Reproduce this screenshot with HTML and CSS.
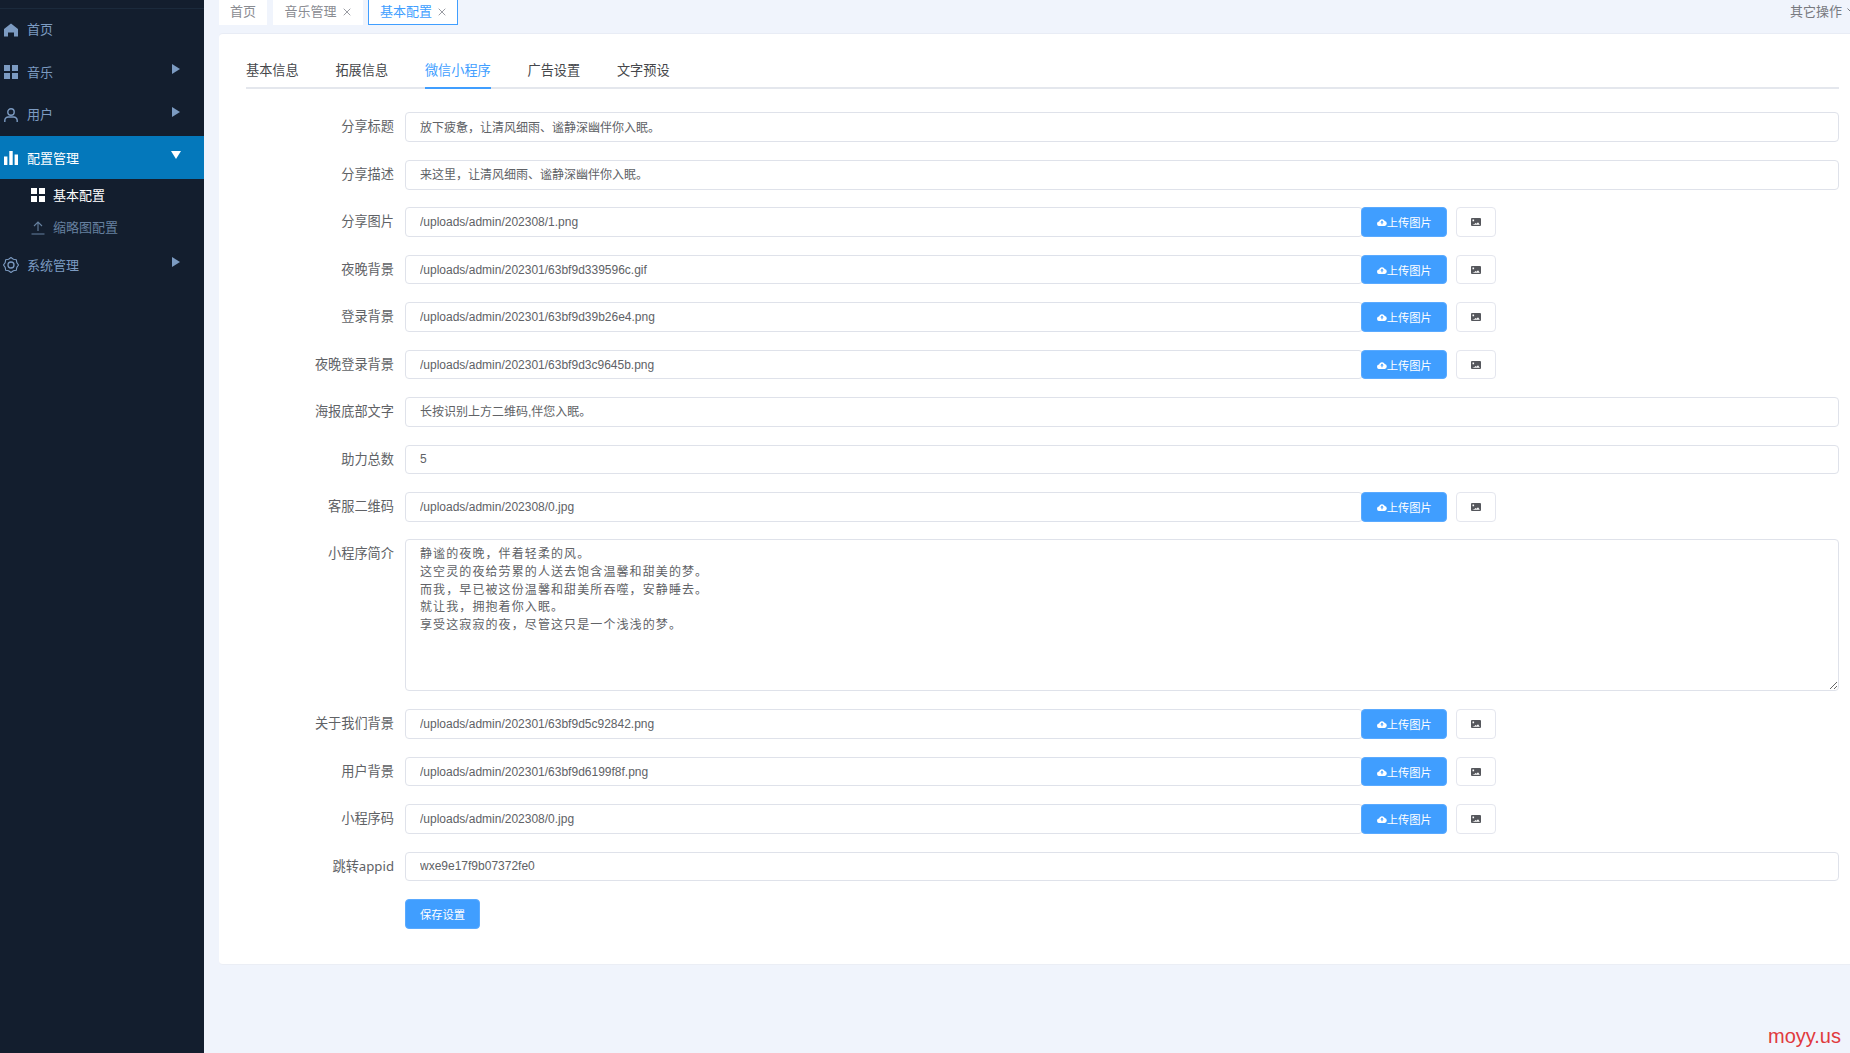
FILE: index.html
```html
<!DOCTYPE html>
<html lang="zh-CN">
<head>
<meta charset="utf-8">
<title>基本配置</title>
<link rel="stylesheet" href="styles.css">
</head>
<body>
<svg class="defs" width="0" height="0" aria-hidden="true">
  <symbol id="i-grid" viewBox="0 0 14 14"><path d="M0 0h6v6H0zM8 0h6v6H8zM0 8h6v6H0zM8 8h6v6H8z"/></symbol>
  <symbol id="i-right" viewBox="0 0 8 10"><path d="M0 0l8 5-8 5z"/></symbol>
  <symbol id="i-x" viewBox="0 0 8 8"><path d="M.7.7l6.6 6.6M7.3.7L.7 7.3" fill="none" stroke="currentColor" stroke-width="1"/></symbol>
  <symbol id="i-cloud" viewBox="0 0 11 9"><path fill-rule="evenodd" d="M2.6 9A2.5 2.5 0 0 1 2.2 4 3.4 3.4 0 0 1 8.6 3.3 2.9 2.9 0 0 1 8.4 9zM5.5 2.8L3.6 5h1.3v2h1.2V5h1.3z"/></symbol>
  <symbol id="i-pic" viewBox="0 0 10 8"><path fill-rule="evenodd" d="M1 0h8a1 1 0 0 1 1 1v6a1 1 0 0 1-1 1H1a1 1 0 0 1-1-1V1a1 1 0 0 1 1-1zM1.500 1.600v1.600h1.600V1.600zM1.200 6.800h7.600L7 4.300 5.600 5.800 4.600 5l-1.100 1z"/></symbol>
</svg>
<div class="app">
  <aside class="sidebar">
    <div class="side-top"></div>
    <a class="menu-item">
      <svg class="ico" viewBox="0 0 14 14"><path d="M7 .5L14 6v7.500H10V9.500H4v4H0V6z"/></svg>
      <span>首页</span>
    </a>
    <a class="menu-item">
      <svg class="ico"><use href="#i-grid"/></svg>
      <span>音乐</span>
      <svg class="arrow"><use href="#i-right"/></svg>
    </a>
    <a class="menu-item">
      <svg class="ico" viewBox="0 0 14 14"><circle cx="7" cy="4" r="3.200" fill="none" stroke="currentColor" stroke-width="1.400"/><path d="M.8 14v-1.500A3.500 3.500 0 0 1 4.300 9h5.400a3.500 3.500 0 0 1 3.500 3.500V14" fill="none" stroke="currentColor" stroke-width="1.400"/></svg>
      <span>用户</span>
      <svg class="arrow"><use href="#i-right"/></svg>
    </a>
    <a class="menu-item active">
      <svg class="ico" viewBox="0 0 14 14"><path d="M0 5.500h3.400V14H0zM5.300 0h3.400v14H5.300zM10.600 3.500H14V14h-3.400z"/></svg>
      <span>配置管理</span>
      <svg class="arrow down" viewBox="0 0 10 8"><path d="M0 0h10L5 8z"/></svg>
    </a>
    <a class="sub-item current">
      <svg class="ico"><use href="#i-grid"/></svg>
      <span>基本配置</span>
    </a>
    <a class="sub-item">
      <svg class="ico" viewBox="0 0 14 14"><path d="M7 1v9M3 5l4-4 4 4M.500 13h13" fill="none" stroke="currentColor" stroke-width="1.100"/></svg>
      <span>缩略图配置</span>
    </a>
    <a class="menu-item">
      <svg class="ico gear" viewBox="0 0 16 16"><path d="M15.500 8L13.820 10.410 13.300 13.300 10.410 13.820 8 15.500 5.590 13.820 2.700 13.300 2.180 10.410 .5 8 2.180 5.590 2.700 2.700 5.590 2.180 8 .5 10.410 2.180 13.300 2.700 13.820 5.590z" fill="none" stroke="currentColor" stroke-width="1.100" stroke-linejoin="round"/><circle cx="8" cy="8" r="3" fill="none" stroke="currentColor" stroke-width="1.300"/></svg>
      <span>系统管理</span>
      <svg class="arrow"><use href="#i-right"/></svg>
    </a>
  </aside>

  <main class="main">
    <header class="page-tabs">
      <a class="page-tab">首页</a>
      <a class="page-tab closable">音乐管理<svg class="close"><use href="#i-x"/></svg></a>
      <a class="page-tab closable on">基本配置<svg class="close"><use href="#i-x"/></svg></a>
      <span class="other">其它操作<svg class="other-chev" viewBox="0 0 8 5"><path d="M.5.500L4 4 7.500.500" fill="none" stroke="currentColor"/></svg></span>
    </header>

    <section class="card">
      <nav class="tabs">
        <a class="tab">基本信息</a>
        <a class="tab">拓展信息</a>
        <a class="tab on">微信小程序</a>
        <a class="tab">广告设置</a>
        <a class="tab">文字预设</a>
      </nav>

      <form class="form">
        <div class="row"><label class="label">分享标题</label><input class="input cjk" value="放下疲惫，让清风细雨、谧静深幽伴你入眠。"></div>
        <div class="row"><label class="label">分享描述</label><input class="input cjk" value="来这里，让清风细雨、谧静深幽伴你入眠。"></div>
        <div class="row upload"><label class="label">分享图片</label><input class="input" value="/uploads/admin/202308/1.png"><button type="button" class="btn-up"><svg class="cloud"><use href="#i-cloud"/></svg>上传图片</button><button type="button" class="btn-pic"><svg class="pic"><use href="#i-pic"/></svg></button></div>
        <div class="row upload"><label class="label">夜晚背景</label><input class="input" value="/uploads/admin/202301/63bf9d339596c.gif"><button type="button" class="btn-up"><svg class="cloud"><use href="#i-cloud"/></svg>上传图片</button><button type="button" class="btn-pic"><svg class="pic"><use href="#i-pic"/></svg></button></div>
        <div class="row upload"><label class="label">登录背景</label><input class="input" value="/uploads/admin/202301/63bf9d39b26e4.png"><button type="button" class="btn-up"><svg class="cloud"><use href="#i-cloud"/></svg>上传图片</button><button type="button" class="btn-pic"><svg class="pic"><use href="#i-pic"/></svg></button></div>
        <div class="row upload"><label class="label">夜晚登录背景</label><input class="input" value="/uploads/admin/202301/63bf9d3c9645b.png"><button type="button" class="btn-up"><svg class="cloud"><use href="#i-cloud"/></svg>上传图片</button><button type="button" class="btn-pic"><svg class="pic"><use href="#i-pic"/></svg></button></div>
        <div class="row"><label class="label">海报底部文字</label><input class="input cjk" value="长按识别上方二维码,伴您入眠。"></div>
        <div class="row"><label class="label">助力总数</label><input class="input" value="5"></div>
        <div class="row upload"><label class="label">客服二维码</label><input class="input" value="/uploads/admin/202308/0.jpg"><button type="button" class="btn-up"><svg class="cloud"><use href="#i-cloud"/></svg>上传图片</button><button type="button" class="btn-pic"><svg class="pic"><use href="#i-pic"/></svg></button></div>
        <div class="row"><label class="label">小程序简介</label><textarea class="textarea">静谧的夜晚，伴着轻柔的风。
这空灵的夜给劳累的人送去饱含温馨和甜美的梦。
而我，早已被这份温馨和甜美所吞噬，安静睡去。
就让我，拥抱着你入眠。
享受这寂寂的夜，尽管这只是一个浅浅的梦。</textarea></div>
        <div class="row upload"><label class="label">关于我们背景</label><input class="input" value="/uploads/admin/202301/63bf9d5c92842.png"><button type="button" class="btn-up"><svg class="cloud"><use href="#i-cloud"/></svg>上传图片</button><button type="button" class="btn-pic"><svg class="pic"><use href="#i-pic"/></svg></button></div>
        <div class="row upload"><label class="label">用户背景</label><input class="input" value="/uploads/admin/202301/63bf9d6199f8f.png"><button type="button" class="btn-up"><svg class="cloud"><use href="#i-cloud"/></svg>上传图片</button><button type="button" class="btn-pic"><svg class="pic"><use href="#i-pic"/></svg></button></div>
        <div class="row upload"><label class="label">小程序码</label><input class="input" value="/uploads/admin/202308/0.jpg"><button type="button" class="btn-up"><svg class="cloud"><use href="#i-cloud"/></svg>上传图片</button><button type="button" class="btn-pic"><svg class="pic"><use href="#i-pic"/></svg></button></div>
        <div class="row"><label class="label">跳转appid</label><input class="input" value="wxe9e17f9b07372fe0"></div>
        <div class="row actions"><button type="button" class="btn-save">保存设置</button></div>
      </form>
    </section>
  </main>
</div>
<div class="watermark">moyy.us</div>
</body>
</html>
```
FILE: styles.css
```css
* { box-sizing: border-box; }
html, body { margin: 0; height: 100%; overflow: hidden; }
body {
  font-family: "Liberation Sans", "Noto Sans CJK SC", sans-serif;
  background: #f0f4fc;
  color: #606266;
}
.defs { position: absolute; }
.app { display: flex; height: 1053px; }

/* sidebar */
.sidebar { width: 204px; flex: none; background: #131e2e; color: #7c9bc2; font-size: 13px; }
.side-top { height: 8.5px; border-bottom: 1px solid #1b2a3c; padding-top: 6px; }
.menu-item { display: flex; align-items: center; height: 42.5px; padding: 0 0 2px 4px; gap: 9px; }
.menu-item.active { background: #0478bb; color: #fff; height: 43px; padding-bottom: 0; }
.sub-item { display: flex; align-items: center; height: 32.500px; padding: 0 0 2px 31px; gap: 8px; color: #66809f; }
.sub-item.current { color: #fff; }
.ico { width: 14px; height: 14px; fill: currentColor; flex: none; margin-top: 2px; }
.active .ico { margin-top: 0; }
.ico.gear { width: 16px; height: 16px; margin-left: -1px; margin-right: -1px; }
.arrow { width: 8px; height: 10px; fill: currentColor; margin-left: auto; margin-right: 24px; margin-bottom: 4px; }
.arrow.down { width: 10px; height: 8px; margin-right: 23px; margin-bottom: 6px; fill: #fff; }

/* page tabs */
.main { flex: 1; min-width: 0; }
.page-tabs { height: 33px; display: flex; align-items: flex-start; padding-left: 15px; gap: 5.500px; font-size: 13px; }
.page-tab { height: 24.500px; background: #fff; padding: 0 10px 2px; display: flex; align-items: center; gap: 6px; color: #8a8c92; border: 1px solid #fff; border-top: 0; justify-content: center; }
.page-tab.closable { padding: 0 11px 2px; }
.page-tab.on { color: #409eff; border: 1px solid #409eff; border-top: 0; }
.close { width: 8px; height: 8px; color: #9a9ca3; margin-top: 2px; }
.other { margin-left: auto; margin-top: 1px; margin-right: -5px; display: flex; align-items: center; gap: 5px; color: #77797f; }
.other-chev { width: 8px; height: 5px; }

/* card */
.card { margin-left: 15px; height: 932px; background: #fff; border-top: 1px solid #e8ecf5; border-bottom: 1px solid #ebeef5; border-radius: 4px 0 0 4px; padding: 15px 11px 0 27px; }
.tabs { display: flex; gap: 36.700px; height: 40px; border-bottom: 2px solid #e4e7ed; font-size: 13.200px; color: #45474b; }
.tab { line-height: 43px; height: 40px; white-space: nowrap; }
.tab.on { color: #409eff; border-bottom: 2px solid #409eff; }

/* form */
.form { display: flex; flex-direction: column; gap: 17.750px; margin-top: 23.400px; }
.row { display: flex; align-items: flex-start; }
.upload { padding-right: 343.700px; }
.label { flex: none; width: 148px; margin-right: 11px; text-align: right; font: 13.200px/29.700px "Noto Sans", "Noto Sans CJK SC", sans-serif; color: #606266; white-space: nowrap; }
.input { flex: 1; min-width: 0; height: 29.700px; padding: 0 14px; border: 1px solid #dfe2ea; border-radius: 4px; background: #fff; font: 12px "Liberation Sans", "Noto Sans CJK SC", sans-serif; color: #606266; outline: 0; }
.input.cjk { padding-bottom: 2px; }
.textarea { flex: 1; height: 152px; padding: 4px 14px; border: 1px solid #dfe2ea; border-radius: 4px; background: #fff; font: 12px/17.650px "Noto Sans CJK SC", sans-serif; letter-spacing: 1.100px; color: #606266; outline: 0; resize: vertical; }
.btn-up { flex: none; width: 86px; height: 29.700px; margin-left: -2px; border: 1px solid #5aaaff; border-radius: 4px; background: #409eff; color: #fff; font: 11.300px "Liberation Sans", "Noto Sans CJK SC", sans-serif; display: flex; align-items: center; justify-content: center; padding: 0; }
.cloud { width: 10px; height: 8px; fill: #fff; }
.btn-pic { flex: none; width: 40px; height: 29.700px; margin-left: 9px; margin-right: -1px; border: 1px solid #e4e6ee; border-radius: 4px; background: #fff; display: flex; align-items: center; justify-content: center; padding: 0; }
.pic { width: 10px; height: 8px; fill: #55575c; }
.actions { padding-left: 159px; }
.btn-save { width: 75px; height: 30px; border: 1px solid #5aaaff; border-radius: 4px; background: #409eff; color: #fff; font: 11.300px "Liberation Sans", "Noto Sans CJK SC", sans-serif; padding: 0; }

.watermark { position: absolute; right: 9px; bottom: 5px; font: 20px/24px "Liberation Sans", sans-serif; color: #e03a3d; }
```
